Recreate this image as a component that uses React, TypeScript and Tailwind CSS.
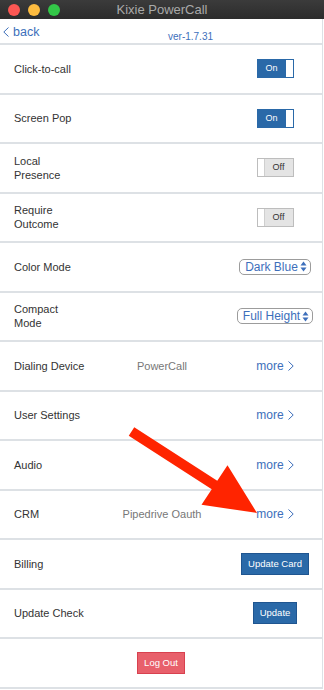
import type { ReactNode } from 'react';

const font = { fontFamily: '"Liberation Sans", Arial, sans-serif' };

function Chevron({ left = false, className = '' }: { left?: boolean; className?: string }) {
  return (
    <svg width="6" height="10" viewBox="0 0 6 10" className={className}>
      <polyline
        points={left ? '5.5,0.5 0.8,5 5.5,9.5' : '0.5,0.5 5.2,5 0.5,9.5'}
        fill="none"
        stroke="#3d6fbb"
        strokeWidth="1"
      />
    </svg>
  );
}

function Toggle({ on }: { on: boolean }) {
  if (on) {
    return (
      <div className="flex w-[37px] h-[19px] border border-[#2a69a8]">
        <span className="flex-1 bg-[#2a69a8] text-white text-[9px] flex items-center justify-center">On</span>
        <span className="w-[7px] bg-white" />
      </div>
    );
  }
  return (
    <div className="flex w-[37px] h-[19px] border border-[#bdbdbd]">
      <span className="w-[7px] bg-white border-r border-[#cfcfcf]" />
      <span className="flex-1 bg-[#e4e4e4] text-[#333] text-[9px] flex items-center justify-center">Off</span>
    </div>
  );
}

function Select({ value }: { value: string }) {
  return (
    <div className="flex items-center gap-[2px] h-[16px] rounded-[5px] border border-[#9c9c9c] pl-[5px] pr-[3px] text-[12px] text-[#3d6fbb] whitespace-nowrap">
      {value}
      <svg width="7" height="11" viewBox="0 0 7 11">
        <polygon points="3.5,0.5 6.5,4.5 0.5,4.5" fill="#3d6fbb" />
        <polygon points="0.5,6.5 6.5,6.5 3.5,10.5" fill="#3d6fbb" />
      </svg>
    </div>
  );
}

function More() {
  return (
    <div className="flex items-center gap-[4px] text-[12px] text-[#3d6fbb]">
      more
      <Chevron />
    </div>
  );
}

function BlueButton({ children }: { children: ReactNode }) {
  return (
    <button className="h-[22px] px-[6px] bg-[#2a69a8] border border-[#1f5590] text-white text-[9.5px]">
      {children}
    </button>
  );
}

function Row({ label, value, children }: { label: ReactNode; value?: string; children?: ReactNode }) {
  return (
    <div className="grid grid-cols-[80px_1fr_90px] items-center h-[49.5px] border-b-2 border-[#dde1e5] pl-[14px] pr-[2px]">
      <div className="text-[11px] leading-[14px] text-[#333] whitespace-nowrap">{label}</div>
      <div className="text-center text-[11px] text-[#777] whitespace-nowrap">{value}</div>
      <div className="flex justify-center">{children}</div>
    </div>
  );
}

export default function App() {
  return (
    <div className="relative w-[324px] h-[690px] bg-white overflow-hidden" style={font}>
      <div className="relative h-[19px] bg-gradient-to-b from-[#3b3b3b] to-[#2c2c2c] flex items-center justify-center">
        <div className="absolute left-[8px] top-[3.5px] flex gap-[8px]">
          <span className="w-[12px] h-[12px] rounded-full bg-[#fc5753]" />
          <span className="w-[12px] h-[12px] rounded-full bg-[#fdbc40]" />
          <span className="w-[12px] h-[12px] rounded-full bg-[#33c748]" />
        </div>
        <span className="text-[13px] text-[#a9a9a9]">Kixie PowerCall</span>
      </div>

      <div className="w-[323px] border-r border-[#dde1e5]">
        <div className="relative h-[26px] border-b-2 border-[#dde1e5] flex items-center">
          <div className="flex items-center gap-[4px] pl-[3px] pt-[2px] text-[12.5px] text-[#3d6fbb]">
            <Chevron left />
            back
          </div>
          <span className="absolute left-[168px] top-[10px] text-[10px] text-[#3d6fbb]">ver-1.7.31</span>
        </div>

        <Row label="Click-to-call"><Toggle on /></Row>
        <Row label="Screen Pop"><Toggle on /></Row>
        <Row label={<>Local<br />Presence</>}><Toggle on={false} /></Row>
        <Row label={<>Require<br />Outcome</>}><Toggle on={false} /></Row>
        <Row label="Color Mode"><Select value="Dark Blue" /></Row>
        <Row label={<>Compact<br />Mode</>}><Select value="Full Height" /></Row>
        <Row label="Dialing Device" value="PowerCall"><More /></Row>
        <Row label="User Settings"><More /></Row>
        <Row label="Audio"><More /></Row>
        <Row label="CRM" value="Pipedrive Oauth"><More /></Row>
        <Row label="Billing"><BlueButton>Update Card</BlueButton></Row>
        <Row label="Update Check"><BlueButton>Update</BlueButton></Row>
        <div className="flex items-center justify-center h-[49.5px] border-b-2 border-[#dde1e5]">
          <button className="h-[22px] px-[6px] bg-[#e8606b] border border-[#d8414f] text-white text-[9.5px]">
            Log Out
          </button>
        </div>
      </div>

      <svg className="absolute left-0 top-0 pointer-events-none" width="324" height="690">
        <polygon
          points="134.25,427.3 217.25,480.8 227.5,465.25 257,513 201.5,504.75 211.75,489.2 128.75,435.7"
          fill="#ff2400"
        />
      </svg>
    </div>
  );
}
